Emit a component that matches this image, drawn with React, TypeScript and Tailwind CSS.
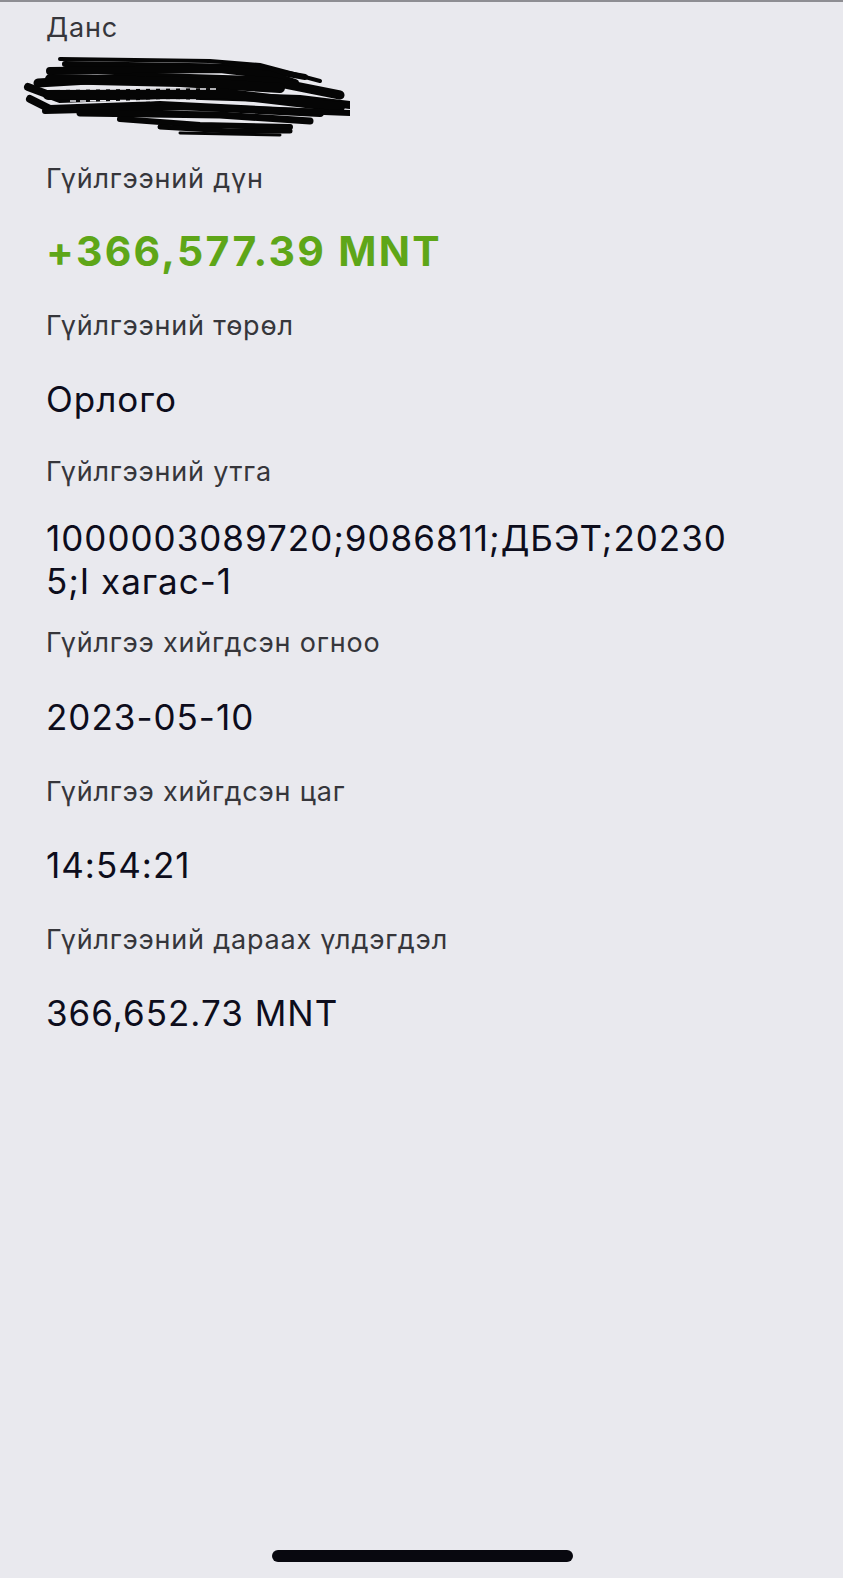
import React from "react";

const Label = ({ children, className = "" }: { children: React.ReactNode; className?: string }) => (
  <div className={`text-[27px] leading-[30px] tracking-[0.8px] text-[#36363b] ${className}`}>{children}</div>
);

const Value = ({ children, className = "" }: { children: React.ReactNode; className?: string }) => (
  <div className={`text-[35px] leading-[43px] tracking-[1px] text-[#0d0d1c] ${className}`}>{children}</div>
);

const Scribble = () => (
  <svg width="330" height="84" viewBox="0 0 330 84" className="-ml-[26px] block">
    <g stroke="#050505" strokeLinecap="round" fill="none">
      <path d="M40 4 L190 6 L240 10 L300 26" strokeWidth="4" />
      <path d="M45 9 L230 12 L285 22" strokeWidth="6" />
      <path d="M30 16 L200 14 L250 20 L275 28" strokeWidth="8" />
      <path d="M18 28 L120 22 L250 26 L320 40" strokeWidth="9" />
      <path d="M30 24 L160 27 L260 33" strokeWidth="10" />
      <path d="M8 32 L40 44 L150 40 L280 44 L330 50" strokeWidth="8" />
      <path d="M28 40 L200 38 L320 52" strokeWidth="10" />
      <path d="M10 44 L30 54 L140 50 L300 58" strokeWidth="8" />
      <path d="M25 56 L180 52 L330 58" strokeWidth="6" />
      <path d="M60 58 L200 60 L290 66" strokeWidth="7" />
      <path d="M100 64 L180 70 L270 72" strokeWidth="6" />
      <path d="M140 72 L210 76 L270 76" strokeWidth="5" />
      <path d="M160 78 L260 80" strokeWidth="3" />
    </g>
    <g stroke="#e9e9ee" strokeWidth="1.5" strokeDasharray="6 4" fill="none">
      <path d="M40 34 L200 34" />
      <path d="M50 46 L180 45" />
    </g>
  </svg>
);

export default function App() {
  return (
    <div
      className="min-h-[1578px] w-full bg-[#e9e9ee] border-t-2 border-[#8e8e93] flex flex-col"
      style={{ fontFamily: "Inter, 'Noto Sans', 'Liberation Sans', sans-serif" }}
    >
      <div className="pl-[46px] flex flex-col">
        <Label className="mt-[11px]">Данс</Label>
        <div className="mt-[12px]">
          <Scribble />
        </div>
        <Label className="mt-[25px]">Гүйлгээний дүн</Label>
        <div className="mt-[32px] text-[41px] leading-[50px] font-bold tracking-[2.3px] text-[#5ea618]">+366,577.39 MNT</div>
        <Label className="mt-[35px]">Гүйлгээний төрөл</Label>
        <Value className="mt-[37px]">Орлого</Value>
        <Label className="mt-[36px]">Гүйлгээний утга</Label>
        <Value className="mt-[30px]">
          <div>1000003089720;9086811;ДБЭТ;20230</div>
          <div>5;I хагас-1</div>
        </Value>
        <Label className="mt-[25px]">Гүйлгээ хийгдсэн огноо</Label>
        <Value className="mt-[38px]">2023-05-10</Value>
        <Label className="mt-[38px]">Гүйлгээ хийгдсэн цаг</Label>
        <Value className="mt-[37px]">14:54:21</Value>
        <Label className="mt-[38px]">Гүйлгээний дараах үлдэгдэл</Label>
        <Value className="mt-[37px]">366,652.73 MNT</Value>
      </div>
      <div className="flex-1" />
      <div className="flex justify-center pb-[16px]">
        <div className="w-[301px] h-[12px] rounded-full bg-[#08080f] ml-[1px]" />
      </div>
    </div>
  );
}
